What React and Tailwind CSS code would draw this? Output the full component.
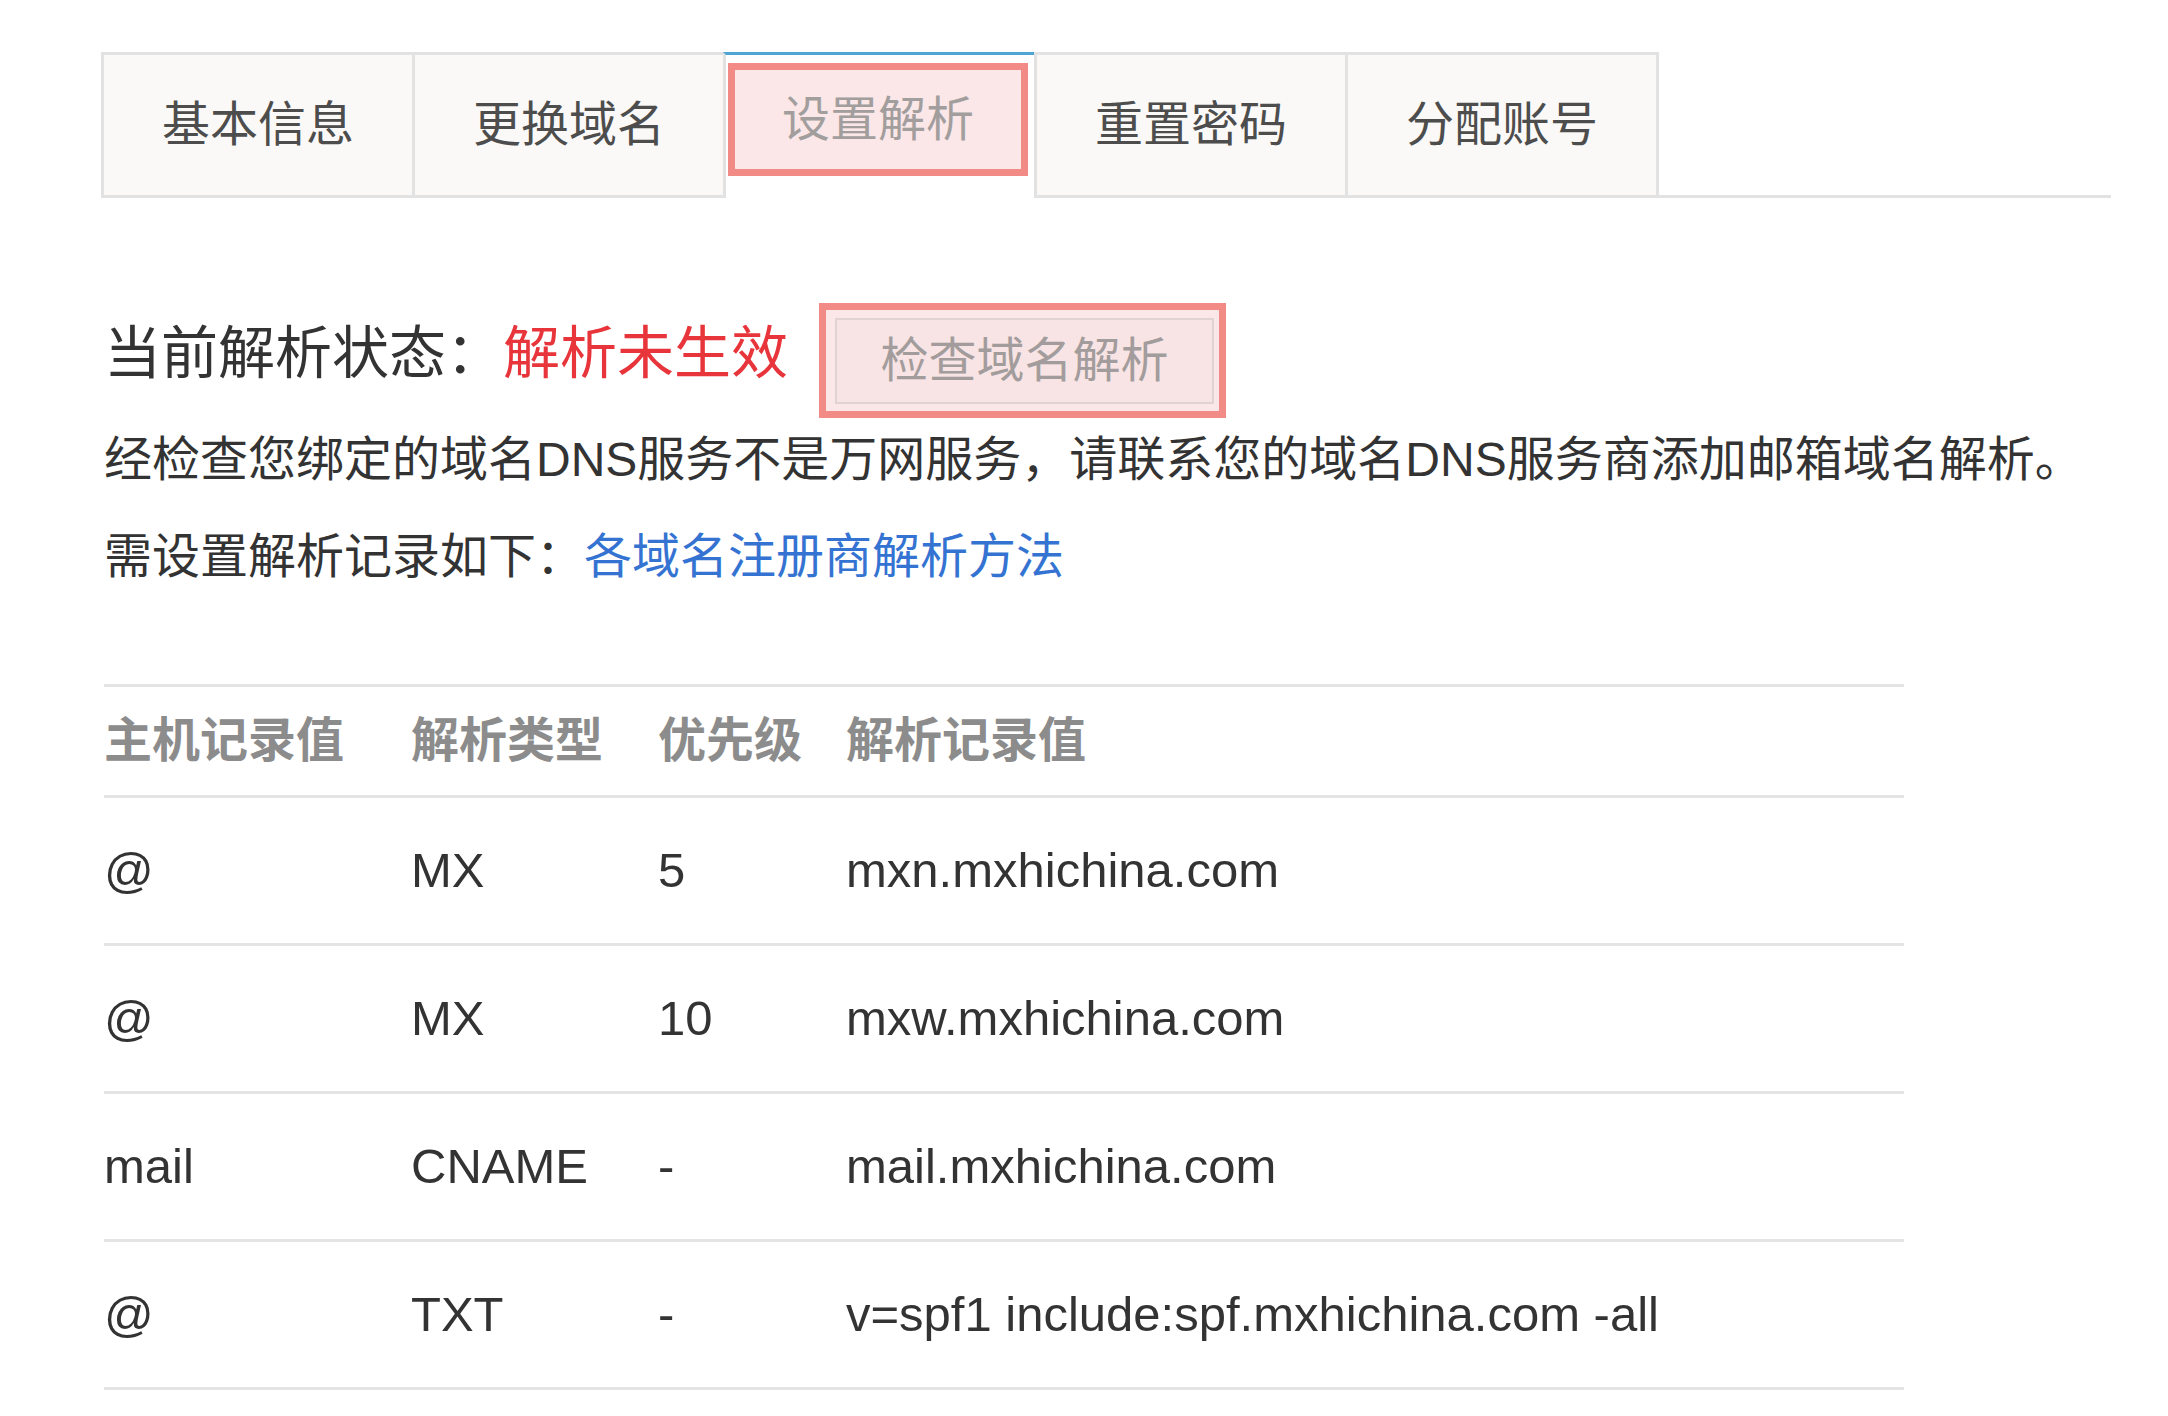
import React from 'react';

const tabs = ['基本信息', '更换域名', '设置解析', '重置密码', '分配账号'];

const records = [
  { host: '@', type: 'MX', priority: '5', value: 'mxn.mxhichina.com' },
  { host: '@', type: 'MX', priority: '10', value: 'mxw.mxhichina.com' },
  { host: 'mail', type: 'CNAME', priority: '-', value: 'mail.mxhichina.com' },
  { host: '@', type: 'TXT', priority: '-', value: 'v=spf1 include:spf.mxhichina.com -all' },
];

const App = () => {
  return (
    <div className="min-h-screen bg-white pt-[52px] font-['Liberation_Sans','Noto_Sans_CJK_SC',sans-serif] text-[#333]">
      {/* Tabs */}
      <div className="ml-[101px] flex w-[2010px] border-b-[3px] border-[#e2e2e2]">
        {tabs.map((tab, index) => {
          const isActive = index === 2;
          const isLast = index === tabs.length - 1;
          if (isActive) {
            return (
              <div
                key={tab}
                className="-mb-[3px] flex h-[146px] w-[311px] flex-col border-l-[3px] border-t-[3px] border-l-[#e2e2e2] border-t-[#4ea5d1] bg-white pb-[22px] pl-[2px] pr-[6px] pt-[8px]"
              >
                {/* highlight box */}
                <div className="flex flex-1 items-center justify-center border-[7px] border-[#f28a86] bg-[#fbe7e7] text-[48px] leading-none text-[#a29e9e]">
                  {tab}
                </div>
              </div>
            );
          }
          return (
            <div
              key={tab}
              className={`flex h-[143px] items-center justify-center border-l-[3px] border-t-[3px] border-[#e2e2e2] bg-[#faf9f7] text-[48px] leading-none text-[#4d4d4d] ${
                isLast ? 'w-[314px] border-r-[3px]' : 'w-[311px]'
              }`}
            >
              {tab}
            </div>
          );
        })}
      </div>

      <main className="pl-[104px]">
        {/* Status */}
        <div className="mt-[105px] flex items-start">
          <p className="mt-[15px] text-[57px] leading-[70px] text-[#333]">
            当前解析状态：<span className="text-[#e8353b]">解析未生效</span>
          </p>
          <div className="ml-[31px] border-[7px] border-[#f28a86] bg-[#fbe7e7] pb-[7px] pl-[9px] pr-[5px] pt-[8px]">
            <button className="flex h-[86px] w-[379px] items-center justify-center border-2 border-[#e2d3d3] bg-[#f8e4e4] text-[48px] leading-none text-[#a39c9c]">
              检查域名解析
            </button>
          </div>
        </div>

        <p className="mt-[12px] text-[48px] leading-[60px] text-[#333]">
          经检查您绑定的域名DNS服务不是万网服务，请联系您的域名DNS服务商添加邮箱域名解析。
        </p>
        <p className="mt-[37px] text-[48px] leading-[60px] text-[#333]">
          需设置解析记录如下：<a className="text-[#3473d2]">各域名注册商解析方法</a>
        </p>

        {/* Records table */}
        <div className="mt-[97px] w-[1800px] border-t-[3px] border-[#e4e4e4]">
          <div className="grid h-[111px] grid-cols-[307px_247px_188px_1fr] items-center border-b-[3px] border-[#e4e4e4] text-[48px] font-bold leading-none text-[#8c8c8c]">
            <div>主机记录值</div>
            <div>解析类型</div>
            <div>优先级</div>
            <div>解析记录值</div>
          </div>
          {records.map((r, i) => (
            <div
              key={i}
              className="grid h-[148px] grid-cols-[307px_247px_188px_1fr] items-center border-b-[3px] border-[#e4e4e4] text-[49px] leading-none text-[#333]"
            >
              <div>{r.host}</div>
              <div>{r.type}</div>
              <div>{r.priority}</div>
              <div>{r.value}</div>
            </div>
          ))}
        </div>
      </main>
    </div>
  );
};

export default App;
